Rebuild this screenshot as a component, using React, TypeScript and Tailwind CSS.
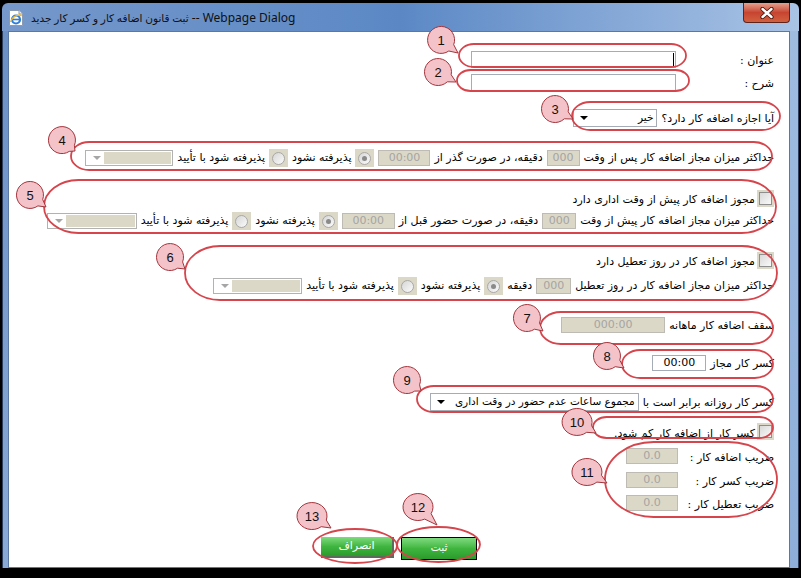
import React from 'react';

type Bubble = { n: string; cx: number; cy: number; tx: number; ty: number };

const bubbles: Bubble[] = [
  { n: '1', cx: 441, cy: 40, tx: 458, ty: 53 },
  { n: '2', cx: 438, cy: 72, tx: 456, ty: 82 },
  { n: '3', cx: 555, cy: 109, tx: 573, ty: 119 },
  { n: '4', cx: 62, cy: 140, tx: 75, ty: 151 },
  { n: '5', cx: 30, cy: 195, tx: 46, ty: 207 },
  { n: '6', cx: 170, cy: 257, tx: 185, ty: 269 },
  { n: '7', cx: 527, cy: 318, tx: 543, ty: 331 },
  { n: '8', cx: 607, cy: 356, tx: 624, ty: 368 },
  { n: '9', cx: 407, cy: 380, tx: 421, ty: 391 },
  { n: '10', cx: 577, cy: 422, tx: 596, ty: 433 },
  { n: '11', cx: 587, cy: 472, tx: 607, ty: 483 },
  { n: '12', cx: 418, cy: 507, tx: 437, ty: 525 },
  { n: '13', cx: 312, cy: 516, tx: 331, ty: 528 },
];

// x, y, w, h of the red marks
const rings: number[][] = [
  [459, 44, 227, 23],
  [457, 70, 232, 21],
  [572, 102, 208, 28],
  [71, 142, 701, 28],
  [44, 180, 732, 53],
  [185, 246, 592, 54],
  [540, 312, 233, 32],
  [622, 350, 151, 28],
  [417, 386, 356, 26],
  [593, 417, 180, 21],
  [605, 442, 172, 75],
];

function bubblePath(b: Bubble) {
  const rx = b.n.length > 1 ? 15 : 13.5;
  const ry = 13.5;
  const th = Math.atan2((b.ty - b.cy) / ry, (b.tx - b.cx) / rx);
  const d = 0.3;
  const p = (a: number) => `${(b.cx + rx * Math.cos(a)).toFixed(1)} ${(b.cy + ry * Math.sin(a)).toFixed(1)}`;
  return `M ${p(th + d)} A ${rx} ${ry} 0 1 1 ${p(th - d)} L ${b.tx} ${b.ty} Z`;
}

function Marks() {
  return (
    <svg className="absolute left-0 top-0 pointer-events-none" width="801" height="578" viewBox="0 0 801 578">
      {rings.map(([x, y, w, h], i) => (
        <rect key={i} x={x} y={y} width={w} height={h} rx={Math.min(w / 2, h * 0.65)} ry={h / 2} fill="none" stroke="#d6444c" strokeWidth="1.8" />
      ))}
      <ellipse cx="438.5" cy="544.5" rx="41.5" ry="17.5" fill="none" stroke="#d6444c" strokeWidth="1.8" />
      <ellipse cx="355" cy="546" rx="42" ry="17" fill="none" stroke="#d6444c" strokeWidth="1.8" />
      {bubbles.map((b) => (
        <g key={b.n}>
          <path d={bubblePath(b)} fill="#f4c3ca" stroke="#a3343b" strokeWidth="1" />
          <text x={b.cx} y={b.cy + 4.5} textAnchor="middle" fontFamily="Liberation Sans, Arial, sans-serif" fontSize="13" fill="#111">
            {b.n}
          </text>
        </g>
      ))}
    </svg>
  );
}

function Box({ w, h = 'h-[16px]', value = '', disabled = false }: { w: string; h?: string; value?: string; disabled?: boolean }) {
  return (
    <div
      className={`${w} ${h} shrink-0 border flex items-center justify-center text-[11px] ${
        disabled ? 'bg-[#dcd8c7] border-[#bdbbb3] text-[#a4a4a4]' : 'bg-white border-[#a5acb5] text-black'
      }`}
    >
      {value}
    </div>
  );
}

function Radio({ checked = false }: { checked?: boolean }) {
  return (
    <span className="w-[19px] h-[18px] shrink-0 bg-[#dcd8c7] flex items-center justify-center">
      <span className="w-[13px] h-[13px] rounded-full border border-[#a8a8a8] bg-linear-to-br from-[#d6d6d6] to-[#fbfbfb] flex items-center justify-center">
        {checked && <span className="w-[5px] h-[5px] rounded-full bg-[#8a8a8a]" />}
      </span>
    </span>
  );
}

function Check() {
  return (
    <span className="w-[17px] h-[17px] shrink-0 bg-[#dcd8c7] flex items-center justify-center">
      <span className="w-[13px] h-[13px] border border-[#8e8e8e] bg-linear-to-br from-[#d9d9d9] to-[#f9f9f9]" />
    </span>
  );
}

function Arrow({ dark = false }: { dark?: boolean }) {
  return (
    <span
      className={`shrink-0 w-0 h-0 border-x-[4px] border-x-transparent border-t-[4px] ${dark ? 'border-t-black' : 'border-t-[#a6a6a6]'}`}
    />
  );
}

function DisSelect({ w }: { w: string }) {
  return (
    <div className={`${w} h-[16px] shrink-0 border border-[#b2b2b2] bg-white flex items-center pr-[1px] pl-[4px]`}>
      <span className="flex-1 h-[12px] bg-[#dcd8c7]" />
      <span className="w-[14px] flex justify-center">
        <Arrow />
      </span>
    </div>
  );
}

function Select({ w, value }: { w: string; value: string }) {
  return (
    <div className={`${w} h-[18px] shrink-0 border border-[#a5acb5] bg-white flex items-center justify-between pr-[3px] pl-[6px] text-[10.5px] whitespace-nowrap`}>
      <span>{value}</span>
      <Arrow dark />
    </div>
  );
}

function Accept() {
  return (
    <>
      <Radio checked />
      <span>پذیرفته نشود</span>
      <Radio />
      <span>پذیرفته شود با تأیید</span>
    </>
  );
}

function TitleBar() {
  return (
    <div className="h-[28px] flex justify-between rounded-t-[6px] bg-linear-to-r from-[#7698ca] via-[#5b88c5] to-[#a9c3e5]">
      <div className="flex items-center gap-[6px] pl-[5px] pt-[2px]">
        <svg width="18" height="18" viewBox="0 0 18 18">
          <path d="M2.5 1.5 H12 L15.5 5 V16.5 H2.5 Z" fill="#fff" stroke="#8c9bb0" />
          <path d="M12 1.5 V5 H15.5" fill="#e8eef5" stroke="#8c9bb0" />
          <circle cx="9" cy="10.5" r="4" fill="none" stroke="#2f7fd8" strokeWidth="2.2" />
          <path d="M5.5 10.5 H12.5" stroke="#2f7fd8" strokeWidth="1.6" />
          <path d="M3.5 13 C6 6 13 5 14.5 7" fill="none" stroke="#f0b625" strokeWidth="1.3" />
        </svg>
        <span className="font-['Segoe_UI','Noto_Sans','DejaVu_Sans',sans-serif] text-[12px] text-[#101010] whitespace-nowrap">
          <span className="text-[10.5px]">ثبت قانون اضافه کار و کسر کار جدید</span> -- Webpage Dialog
        </span>
      </div>
      <div className="mr-[9px] w-[47px] h-[20px] rounded-b-[4px] border border-t-0 border-[#5e231b] bg-linear-to-b from-[#e3a08f] via-[#c74431] to-[#d2603f] flex items-center justify-center">
        <svg width="14" height="12" viewBox="0 0 14 12">
          <path d="M2.5 2 L11.5 10 M11.5 2 L2.5 10" stroke="#4a140c" strokeWidth="4.2" strokeLinecap="round" />
          <path d="M2.5 2 L11.5 10 M11.5 2 L2.5 10" stroke="#fff" strokeWidth="2.4" strokeLinecap="round" />
        </svg>
      </div>
    </div>
  );
}

export default function App() {
  return (
    <div className="relative w-[801px] h-[578px] bg-black overflow-hidden pt-[3px] px-[2px] font-[Tahoma,'DejaVu_Sans',sans-serif] text-[11px] text-black">
      <TitleBar />
      <div className="flex h-[537px]">
        <div className="w-[6px] bg-linear-to-b from-[#6a90c6] to-[#8aaad6] border-l border-[#2b3f5c]" />
        <div className="w-[782px] bg-white border border-[#5b78a2] flex flex-col">
          <div dir="rtl" className="flex flex-col pr-[15px]">
            <div className="flex items-center h-[18px] mt-[18px]">
              <span className="w-[98px] pt-[4px]">عنوان :</span>
              <div className="relative">
                <Box w="w-[205px]" h="h-[17px]" />
                <span className="absolute right-[2px] top-[2px] w-[1px] h-[13px] bg-black" />
              </div>
            </div>
            <div className="flex items-center h-[18px] mt-[5px]">
              <span className="w-[98px] pt-[4px]">شرح :</span>
              <Box w="w-[205px]" h="h-[17px]" />
            </div>
            <div className="flex items-center gap-[4px] h-[18px] mt-[18px]">
              <span className="pt-[3px]">آیا اجازه اضافه کار دارد؟</span>
              <Select w="w-[84px]" value="خیر" />
            </div>
            <div className="flex items-center gap-[4px] h-[18px] mt-[22px]">
              <span>حداکثر میزان مجاز اضافه کار پس از وقت</span>
              <Box w="w-[33px]" value="000" disabled />
              <span>دقیقه، در صورت گذر از</span>
              <Box w="w-[52px]" value="00:00" disabled />
              <Accept />
              <DisSelect w="w-[88px]" />
            </div>
            <div className="flex items-center gap-[2px] h-[18px] mt-[22px]">
              <Check />
              <span className="pt-[4px]">مجوز اضافه کار پیش از وقت اداری دارد</span>
            </div>
            <div className="flex items-center gap-[4px] h-[18px] mt-[5px]">
              <span>حداکثر میزان مجاز اضافه کار پیش از وقت</span>
              <Box w="w-[34px]" value="000" disabled />
              <span>دقیقه، در صورت حضور قبل از</span>
              <Box w="w-[53px]" value="00:00" disabled />
              <Accept />
              <DisSelect w="w-[90px]" />
            </div>
            <div className="flex items-center gap-[2px] h-[18px] mt-[21px]">
              <Check />
              <span className="pt-[4px]">مجوز اضافه کار در روز تعطیل دارد</span>
            </div>
            <div className="flex items-center gap-[4px] h-[18px] mt-[8px]">
              <span>حداکثر میزان مجاز اضافه کار در روز تعطیل</span>
              <Box w="w-[35px]" value="000" disabled />
              <span>دقیقه</span>
              <Accept />
              <DisSelect w="w-[89px]" />
            </div>
            <div className="flex items-center gap-[4px] h-[18px] mt-[21px]">
              <span className="pt-[3px]">سقف اضافه کار ماهانه</span>
              <Box w="w-[104px]" value="000:00" disabled />
            </div>
            <div className="flex items-center gap-[4px] h-[18px] mt-[20px]">
              <span className="pt-[3px]">کسر کار مجاز</span>
              <Box w="w-[54px]" value="00:00" />
            </div>
            <div className="flex items-center gap-[4px] h-[18px] mt-[21px]">
              <span className="pt-[3px]">کسر کار روزانه برابر است با</span>
              <Select w="w-[209px]" value="مجموع ساعات عدم حضور در وقت اداری" />
            </div>
            <div className="flex items-center gap-[2px] h-[18px] mt-[11px]">
              <Check />
              <span className="pt-[6px]">کسر کار از اضافه کار کم شود.</span>
            </div>
            <div className="flex items-center h-[18px] mt-[7px]">
              <span className="w-[96px] pt-[4px]">ضریب اضافه کار :</span>
              <Box w="w-[52px]" value="0.0" disabled />
            </div>
            <div className="flex items-center h-[18px] mt-[6px]">
              <span className="w-[96px] pt-[4px]">ضریب کسر کار :</span>
              <Box w="w-[52px]" value="0.0" disabled />
            </div>
            <div className="flex items-center h-[18px] mt-[5px]">
              <span className="w-[96px] pt-[4px]">ضریب تعطیل کار :</span>
              <Box w="w-[52px]" value="0.0" disabled />
            </div>
          </div>
          <div dir="rtl" className="flex justify-center items-start gap-[7px] mt-[25px]">
            <button className="w-[76px] h-[23px] border border-black bg-linear-to-b from-[#7ddb7d] via-[#3fb53f] to-[#2b9b2b] text-white text-[11px]">
              ثبت
            </button>
            <button className="w-[73px] h-[21px] border-r-2 border-b-2 border-[#5d6b5d] bg-linear-to-b from-[#7ddb7d] via-[#3fb53f] to-[#2b9b2b] text-white text-[11px]">
              انصراف
            </button>
          </div>
        </div>
        <div className="w-[9px] bg-linear-to-b from-[#9fbbe0] to-[#8eaed9] border-r border-[#2b3f5c]" />
      </div>
      <Marks />
    </div>
  );
}
